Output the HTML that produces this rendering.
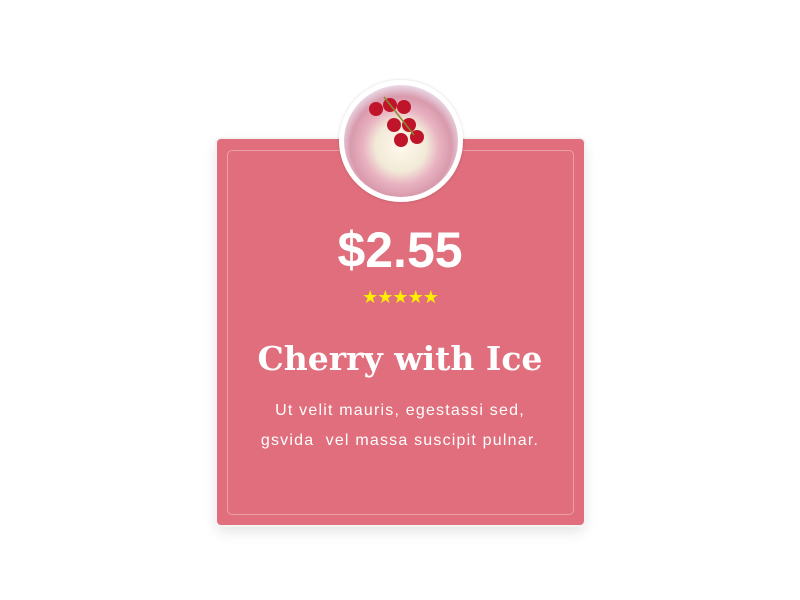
<!DOCTYPE html>
<html><head><style>
body{margin:0;width:800px;height:600px;background:#fff;position:relative;overflow:hidden;font-family:"Liberation Sans",sans-serif}
.card{position:absolute;left:217px;top:139px;width:367px;height:386px;background:#e06e7c;border-radius:4px;box-shadow:0 0 0 2px #f4f4f4,0 6px 14px rgba(0,0,0,0.12)}
.inner{position:absolute;left:10px;top:11px;right:10px;bottom:10px;border:1px solid rgba(255,255,255,0.35);border-radius:5px}
.circ{position:absolute;left:339px;top:80px;width:114px;height:112px;border-radius:50%;border:5px solid #fff;background:radial-gradient(circle at 50% 55%,#fff8ec 0,#f2ead8 30%,#e9b3c2 45%,#d89aac 60%,#ece2ee 75%);box-shadow:0 0 3px rgba(0,0,0,.15);overflow:hidden}
.price{position:absolute;left:0;width:800px;top:222px;text-align:center;color:#fff;font-weight:bold;font-size:50px;line-height:56px}
.stars{position:absolute;left:0;width:800px;top:287px;text-align:center;color:#ffee00;font-size:18px;letter-spacing:-1px}
h1{position:absolute;left:0;width:800px;top:335px;margin:0;text-align:center;color:#fff;font-family:"DejaVu Serif","Liberation Serif",serif;font-weight:bold;font-size:33px;line-height:48px}
p{position:absolute;left:0;width:800px;top:396px;margin:0;text-align:center;color:#fff;font-size:16px;line-height:30px;letter-spacing:1.2px}
</style></head><body>
<div class="card"><div class="inner"></div></div>
<div class="circ">
<svg width="114" height="112" style="position:absolute;left:0;top:0">
<g fill="#c0142a"><circle cx="32" cy="24" r="7"/><circle cx="46" cy="20" r="7"/><circle cx="60" cy="22" r="7"/><circle cx="50" cy="40" r="7"/><circle cx="65" cy="40" r="7"/><circle cx="57" cy="55" r="7"/><circle cx="73" cy="52" r="7"/></g>
<path d="M40 12 L70 50" stroke="#8a8a2a" stroke-width="1.5"/>
</svg>
</div>
<div class="price">$2.55</div>
<div class="stars">★★★★★</div>
<h1>Cherry with Ice</h1>
<p>Ut velit mauris, egestassi sed,<br>gsvida&nbsp; vel massa suscipit pulnar.</p>
</body></html>
